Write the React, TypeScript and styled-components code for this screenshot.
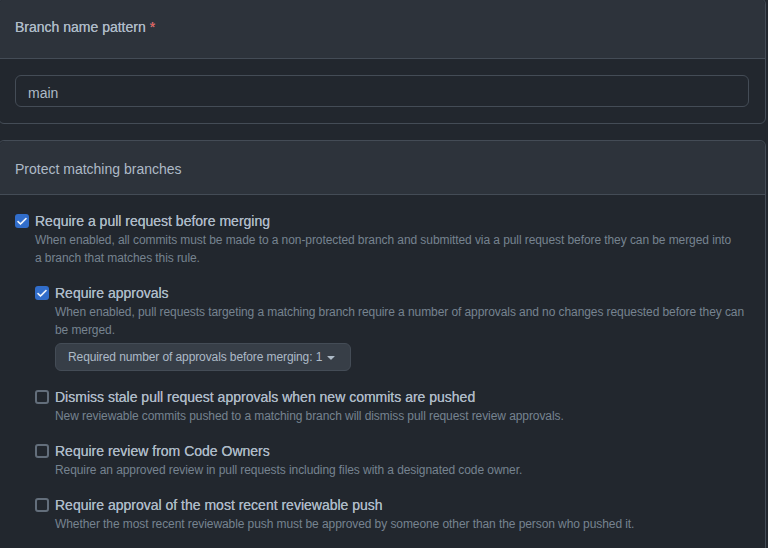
import React from "react";
import styled, { createGlobalStyle } from "styled-components";

const GlobalStyle = createGlobalStyle`
  html, body {
    margin: 0;
    padding: 0;
    background-color: #22272e;
    overflow: hidden;
  }
  body {
    font-family: "Liberation Sans", Arial, sans-serif;
    color: #adbac7;
  }
  * {
    box-sizing: border-box;
  }
`;

type Option = {
  title: string;
  description: string;
  checked?: boolean;
  children?: React.ReactNode;
};

const Check = ({ checked }: { checked?: boolean }) => (
  <CheckBox $checked={checked}>
    {checked && (
      <svg width="12" height="12" viewBox="0 0 16 16" fill="#ffffff">
        <path d="M13.78 4.22a.75.75 0 0 1 0 1.06l-7.25 7.25a.75.75 0 0 1-1.06 0L2.22 9.28a.75.75 0 0 1 1.06-1.06L6 10.94l6.72-6.72a.75.75 0 0 1 1.06 0Z" stroke="#ffffff" strokeWidth="0.8" />
      </svg>
    )}
  </CheckBox>
);

const OptionRow = ({ title, description, checked, children }: Option) => (
  <Row>
    <Check checked={checked} />
    <RowTitle>{title}</RowTitle>
    <span />
    <RowBody>
      <Note>{description}</Note>
      {children}
    </RowBody>
  </Row>
);

const App = () => {
  return (
    <>
      <GlobalStyle />
      <Page>
        <Box $first>
          <BoxHeader $tall>
            <HeaderLabel>
              Branch name pattern <Required>*</Required>
            </HeaderLabel>
          </BoxHeader>
          <BoxBody>
            <Input defaultValue="main" />
          </BoxBody>
        </Box>

        <Box>
          <BoxHeader>
            <HeaderTitle>Protect matching branches</HeaderTitle>
          </BoxHeader>
          <BoxBody>
            <OptionRow
              checked
              title="Require a pull request before merging"
              description={"When enabled, all commits must be made to a non-protected branch and submitted via a pull request before they can be merged into a\u00A0branch that matches this rule."}
            >
              <Nested>
                <OptionRow
                  checked
                  title="Require approvals"
                  description="When enabled, pull requests targeting a matching branch require a number of approvals and no changes requested before they can be merged."
                >
                  <Select>
                    Required number of approvals before merging: 1
                    <svg width="16" height="16" viewBox="0 0 16 16" fill="#adbac7">
                      <path d="m4.427 7.427 3.396 3.396a.25.25 0 0 0 .354 0l3.396-3.396A.25.25 0 0 0 11.396 7H4.604a.25.25 0 0 0-.177.427Z" />
                    </svg>
                  </Select>
                </OptionRow>
                <OptionRow
                  title="Dismiss stale pull request approvals when new commits are pushed"
                  description="New reviewable commits pushed to a matching branch will dismiss pull request review approvals."
                />
                <OptionRow
                  title="Require review from Code Owners"
                  description="Require an approved review in pull requests including files with a designated code owner."
                />
                <OptionRow
                  title="Require approval of the most recent reviewable push"
                  description="Whether the most recent reviewable push must be approved by someone other than the person who pushed it."
                />
              </Nested>
            </OptionRow>
          </BoxBody>
        </Box>
      </Page>
    </>
  );
};

export default App;

const Page = styled.div`
  width: 768px;
  height: 548px;
  overflow: hidden;
`;

const Box = styled.section<{ $first?: boolean }>`
  width: 768px;
  margin: ${(p) => (p.$first ? "-2px" : "0")} 0 16px -2px;
  border: 1px solid #444c56;
  border-radius: 6px;
`;

const BoxHeader = styled.div<{ $tall?: boolean }>`
  padding: ${(p) => (p.$tall ? "18px 16px 20px" : "18px 16px 14px")};
  background-color: #2d333b;
  border-bottom: 1px solid #444c56;
  border-radius: 6px 6px 0 0;
`;

const HeaderLabel = styled.label`
  display: block;
  font-size: 14px;
  line-height: 21px;
  font-weight: 400;
  color: #adbac7;
  text-shadow: 0 0 0.4px #adbac7;
`;

const HeaderTitle = styled.h3`
  margin: 0;
  font-size: 14px;
  line-height: 21px;
  font-weight: 400;
`;

const Required = styled.span`
  color: #e5534b;
`;

const BoxBody = styled.div`
  padding: 16px;
`;

const Input = styled.input`
  display: block;
  width: 100%;
  height: 32px;
  padding: 7px 12px 3px;
  font-family: inherit;
  font-size: 14px;
  line-height: 20px;
  color: #adbac7;
  background-color: #22272e;
  border: 1px solid #444c56;
  border-radius: 6px;
  outline: none;
`;

const Row = styled.div`
  display: grid;
  grid-template-columns: 20px 1fr;
  align-items: center;
  margin-bottom: 16px;
`;

const CheckBox = styled.span<{ $checked?: boolean }>`
  width: 14px;
  height: 14px;
  display: flex;
  align-items: center;
  justify-content: center;
  border-radius: 3px;
  background-color: ${(p) => (p.$checked ? "#316dca" : "#22272e")};
  border: ${(p) => (p.$checked ? "none" : "2px solid #636e7b")};
`;

const RowTitle = styled.div`
  font-size: 14px;
  line-height: 20px;
  font-weight: 400;
  color: #adbac7;
  text-shadow: 0 0 0.5px #adbac7;
`;

const RowBody = styled.div``;

const Note = styled.p`
  margin: 0;
  font-size: 12px;
  line-height: 18px;
  letter-spacing: -0.08px;
  color: #768390;
`;

const Nested = styled.div`
  margin-top: 16px;
`;

const Select = styled.div`
  display: inline-flex;
  align-items: center;
  gap: 1px;
  height: 28px;
  margin-top: 4px;
  padding: 0 11px 0 12px;
  font-size: 12px;
  letter-spacing: -0.1px;
  color: #adbac7;
  background-color: #373e47;
  border: 1px solid #444c56;
  border-radius: 6px;
`;
